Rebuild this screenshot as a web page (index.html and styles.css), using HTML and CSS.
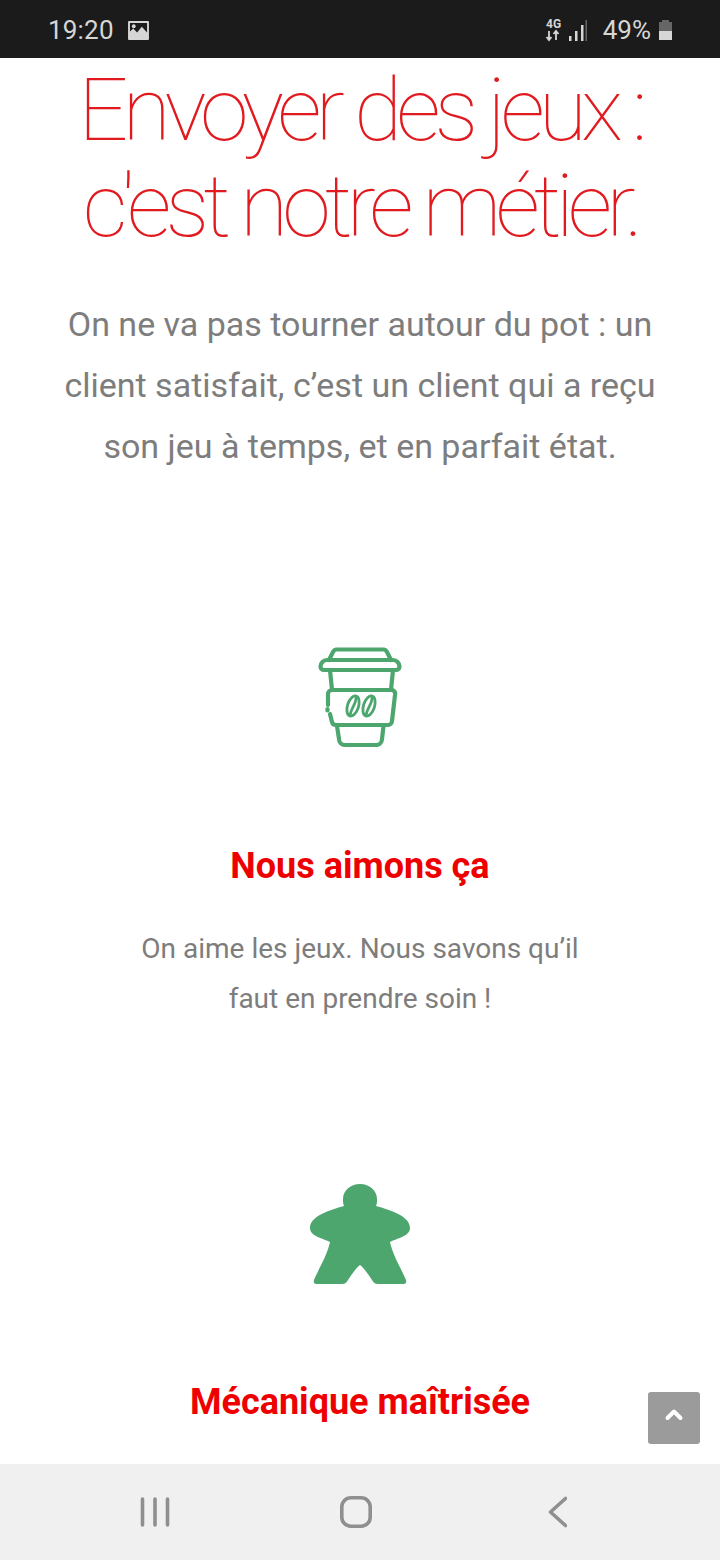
FILE: index.html
```html
<!DOCTYPE html>
<html lang="fr">
<head>
<meta charset="utf-8">
<title>Envoyer des jeux</title>
<link rel="stylesheet" href="styles.css">
</head>
<body>
<div class="phone">
  <header class="status">
    <div class="status-left">
      <span class="time">19:20</span>
      <svg class="pic" width="21" height="19" viewBox="0 0 22 20"><path fill="#d6d6d6" fill-rule="evenodd" d="M1 0h20a1 1 0 0 1 1 1v18a1 1 0 0 1-1 1H1a1 1 0 0 1-1-1V1a1 1 0 0 1 1-1zM2 2v9l3.500-3 4 4 5-6 5.500 6V2z"/><circle cx="6" cy="5.500" r="2" fill="#d6d6d6"/></svg>
    </div>
    <div class="status-right">
      <svg class="net" width="42" height="24" viewBox="0 0 42 24">
        <text x="1" y="9.500" class="net-label">4G</text>
        <path fill="none" stroke="#d6d6d6" stroke-width="1.800" d="M4 13v9M1.500 19l2.500 3 2.500-3M11 22v-9M8.500 16l2.500-3 2.500 3"/>
        <rect x="24" y="18" width="2.500" height="5" fill="#d6d6d6"/>
        <rect x="30" y="13" width="2.500" height="10" fill="#d6d6d6"/>
        <rect x="36" y="7" width="2.500" height="16" fill="#d6d6d6"/>
        <rect x="40.500" y="2" width="1.500" height="21" fill="#666"/>
      </svg>
      <span class="batt-text">49%</span>
      <span class="batt"><span class="batt-cap"></span><span class="batt-body"><span class="batt-fill"></span></span></span>
    </div>
  </header>
  <main class="content">
    <h1 class="title">Envoyer des jeux :<br>c'est notre métier.</h1>
    <p class="lead">On ne va pas tourner autour du pot : un<br>client satisfait, c’est un client qui a reçu<br>son jeu à temps, et en parfait état.</p>
    <section class="feature first">
      <svg class="icon" width="100" height="100" viewBox="0 0 100 100" fill="none" stroke="#4ea66f" stroke-width="4.200" stroke-linejoin="round" stroke-linecap="round">
        <path d="M19 13 23 5a4 4 0 0 1 3-2.500h48a4 4 0 0 1 3 2.500l4 8"/>
        <path d="M17 13h66a6.500 6.500 0 0 1 6.500 6.500 3.500 3.500 0 0 1-3.500 3.500H14a3.500 3.500 0 0 1-3.500-3.500A6.500 6.500 0 0 1 17 13z"/>
        <path d="M20 23l2 20M83 23l-2 20"/>
        <path d="M18 58V47a4 4 0 0 1 4-4h58a4 4 0 0 1 5 5l-3 26a4 4 0 0 1-4 4H26a4 4 0 0 1-4-3l-2-8"/>
        <path d="M17.500 62v1.500"/>
        <path d="M27 79l2 13a6 6 0 0 0 6 6h31a6 6 0 0 0 6-6l1.500-13"/>
        <g stroke-width="2.800">
          <ellipse cx="43" cy="59" rx="5.500" ry="10.500" transform="rotate(18 43 59)"/>
          <path d="M46 49.500c1 7-5 11-6 19"/>
          <ellipse cx="59" cy="59" rx="5.500" ry="10.500" transform="rotate(18 59 59)"/>
          <path d="M62 49.500c1 7-5 11-6 19"/>
        </g>
      </svg>
      <h2 class="feature-title">Nous aimons ça</h2>
      <p class="feature-text">On aime les jeux. Nous savons qu’il<br>faut en prendre soin !</p>
    </section>
    <section class="feature second">
      <svg class="icon" width="100" height="100" viewBox="0 0 100 100"><path fill="#4ea66f" d="M50 0C60 0 67 7 67 15 67 18 67 20 66 22 80 26 100 32 100 44 100 52 88 54 80 58 83 72 92 86 96 96 97 99 95 100 93 100H68C65 100 64 99 62 96 58 90 54 84 50 81 46 84 42 90 38 96 36 99 35 100 32 100H7C5 100 3 99 4 96 8 86 17 72 20 58 12 54 0 52 0 44 0 32 20 26 34 22 33 20 33 18 33 15 33 7 40 0 50 0Z"/></svg>
      <h2 class="feature-title">Mécanique maîtrisée</h2>
    </section>
    <button class="top-btn" type="button" aria-label="Haut de page">
      <svg width="20" height="14" viewBox="0 0 20 14"><path fill="none" stroke="#fff" stroke-width="4" stroke-linecap="round" stroke-linejoin="round" d="M3.500 11 10 4.500l6.500 6.500"/></svg>
    </button>
  </main>
  <nav class="navbar">
    <svg width="30" height="32" viewBox="0 0 30 32"><path stroke="#8f8f8f" stroke-width="3.600" stroke-linecap="round" d="M2.500 3v26M15 3v26M27.500 3v26"/></svg>
    <svg width="32" height="32" viewBox="0 0 32 32"><rect x="1.800" y="1.800" width="28.400" height="28.400" rx="9" fill="none" stroke="#8f8f8f" stroke-width="3.600"/></svg>
    <svg width="25" height="32" viewBox="0 0 25 32"><path fill="none" stroke="#8f8f8f" stroke-width="3.600" stroke-linecap="round" stroke-linejoin="round" d="M23.500 2.500 8.500 16l15 13.500"/></svg>
  </nav>
</div>
</body>
</html>
```
FILE: styles.css
```css
* { box-sizing: border-box; }
html, body { margin: 0; padding: 0; }
body { font-family: Roboto, "Liberation Sans", sans-serif; background: #fff; }
.phone { width: 720px; height: 1560px; display: flex; flex-direction: column; overflow: hidden; }

.status { height: 58px; flex: none; background: #1b1b1b; color: #d6d6d6; display: flex; justify-content: space-between; align-items: center; padding: 2px 48px 0 48px; }
.status-left, .status-right { display: flex; align-items: center; }
.time { font-size: 26px; line-height: 32px; letter-spacing: 0.2px; }
.pic { margin-left: 14px; }
.net { margin-right: 16px; }
.net-label { font: 700 12px Roboto, sans-serif; fill: #d6d6d6; }
.batt-text { font-size: 26px; line-height: 32px; }
.batt { margin-left: 8px; width: 13px; display: flex; flex-direction: column; align-items: center; }
.batt-cap { width: 7px; height: 2px; background: #666; }
.batt-body { width: 13px; height: 18px; background: #666; display: flex; align-items: flex-end; }
.batt-fill { width: 100%; height: 9px; background: #d6d6d6; }

.content { flex: 1; position: relative; overflow: hidden; text-align: center; padding-top: 4px; }
.title { margin: 0; font-weight: 100; font-size: 88px; line-height: 96px; letter-spacing: -6px; color: #e01a1f; }
.lead { margin: 40px 0 0; font-size: 34px; line-height: 61px; color: #7d7d7d; }
.feature { display: flex; flex-direction: column; align-items: center; }
.first { margin-top: 170px; }
.second { margin-top: 160px; }
.icon { display: block; }
.feature-title { margin: 0; font-weight: 700; font-size: 36px; line-height: 44px; color: #ee0000; }
.first .feature-title { margin-top: 97px; }
.second .feature-title { margin-top: 96px; }
.feature-text { margin: 36px 0 0; font-size: 28px; line-height: 50px; color: #7d7d7d; }
.top-btn { position: absolute; right: 20px; bottom: 20px; width: 52px; height: 52px; border: 0; border-radius: 3px; background: #9b9b9b; padding: 0 0 8px; display: flex; align-items: center; justify-content: center; }

.navbar { height: 96px; flex: none; background: #f0f0f0; display: flex; align-items: center; padding-left: 140px; gap: 170px; }
```
